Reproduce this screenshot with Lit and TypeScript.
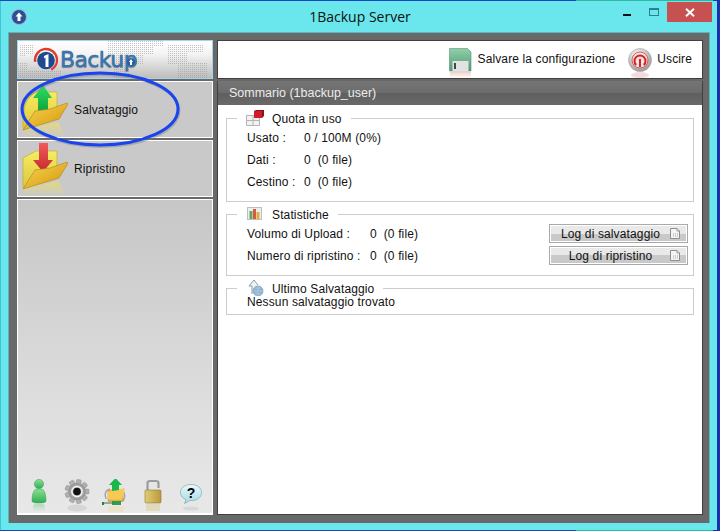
import { LitElement, html, svg, css } from "lit";
import { customElement } from "lit/decorators.js";

const folder = (up: boolean) => {
  const k = up ? 1 : 2;
  return html`
  <svg class="folder" viewBox="0 0 50 55" width="50" height="55">
    <defs>
      <linearGradient id="fb${k}" x1="0" y1="0" x2="0" y2="1"><stop offset="0" stop-color="#f6ec62"/><stop offset="1" stop-color="#dcc63a"/></linearGradient>
      <linearGradient id="ff${k}" x1="0" y1="0" x2="1" y2="1"><stop offset="0" stop-color="#f9d650"/><stop offset="1" stop-color="#d4950c"/></linearGradient>
      <linearGradient id="ar${k}" x1="0" y1="0" x2="0" y2="1"><stop offset="0" stop-color="${up ? "#2ee060" : "#f25a5a"}"/><stop offset="1" stop-color="${up ? "#0c9c3a" : "#c42a2a"}"/></linearGradient>
      <linearGradient id="rf${k}" x1="0" y1="0" x2="0" y2="1"><stop offset="0" stop-color="#f0de60" stop-opacity=".7"/><stop offset="1" stop-color="#f0de60" stop-opacity="0"/></linearGradient>
    </defs>
    <path d="M1 48 L2 55 H44 L36 40 Z" fill="url(#rf${k})"/>
    <path d="M1 17 L14 10 H35 V32 L3 47 Q1 47 1 45 Z" fill="url(#fb${k})" stroke="#b9a63a" stroke-width=".6"/>
    ${up
      ? svg`<path d="M16 32 V16 H11 L21 3 L30 16 H26 V28 Z" fill="url(#ar1)"/>`
      : svg`<path d="M17 2 H26 V19 H31 L21 31 L11 19 H17 Z" fill="url(#ar2)"/>`}
    <path d="M1 48 L13 29 L28 27 L45 21 Q46 21 45.500 23 L37 37 Z" fill="url(#ff${k})" stroke="#a88420" stroke-width=".6"/>
  </svg>`;
};

const person = html`
  <svg viewBox="0 0 24 34" width="24" height="34">
    <defs>
      <linearGradient id="pg" x1="0" y1="0" x2="0" y2="1"><stop offset="0" stop-color="#8ae08e"/><stop offset="1" stop-color="#2fae56"/></linearGradient>
      <linearGradient id="pr" x1="0" y1="0" x2="0" y2="1"><stop offset="0" stop-color="#6ecb80" stop-opacity=".45"/><stop offset="1" stop-color="#6ecb80" stop-opacity="0"/></linearGradient>
    </defs>
    <circle cx="12" cy="5" r="4.600" fill="url(#pg)" stroke="#3c9c58" stroke-width=".5"/>
    <path d="M5 22 Q5 12 9 10 H15 Q19 12 19 22 Q19 24 12 24 Q5 24 5 22 Z" fill="url(#pg)" stroke="#3c9c58" stroke-width=".5"/>
    <rect x="6" y="25" width="12" height="8" rx="3" fill="url(#pr)"/>
  </svg>`;

const gear = html`
  <svg viewBox="0 0 26 34" width="26" height="34">
    <defs>
      <radialGradient id="gg"><stop offset="0" stop-color="#f4f4f4"/><stop offset="1" stop-color="#8c8c8c"/></radialGradient>
    </defs>
    <g transform="translate(13 12.500)">
      ${[0, 40, 80, 120, 160, 200, 240, 280, 320].map(
        (a) => svg`<rect x="-2.400" y="-12" width="4.800" height="6" rx="1" fill="#b0b0b0" stroke="#7c7c7c" stroke-width=".4" transform="rotate(${a + 10})"/>`
      )}
      <circle r="8.600" fill="url(#gg)"/>
      <circle r="5.200" fill="none" stroke="#f8f8f8" stroke-width="1.200"/>
      <circle r="3.800" fill="#111"/>
    </g>
    <ellipse cx="13" cy="29" rx="10" ry="3.500" fill="#cfcfcf" opacity=".7"/>
  </svg>`;

const upload = html`
  <svg viewBox="0 0 28 34" width="28" height="34">
    <g transform="translate(0 -2)">
      <path d="M5 22 Q2 14 9 12 M21 13 Q26 18 22 24 H7" fill="none" stroke="#a8a8a8" stroke-width="1.600"/>
      <path d="M7 13 H22 V24 H7 Z" fill="#f5bb42" stroke="#b98f2c" stroke-width=".5"/>
      <path d="M7 15 L24 11 L21 22 H7 Z" fill="#f8ca55"/>
      <path d="M11 14 V8 H8 L14.500 1 L21 8 H18 V13 Z" fill="#19b84a"/>
      <rect x="11" y="24" width="9" height="4" fill="#2e9c52"/>
      <path d="M2 26 H12" stroke="#2e7c44" stroke-width="1"/>
      <rect x="1" y="25" width="2" height="3" fill="#2e7c44"/>
      <rect x="7" y="29" width="16" height="6" fill="#f0d9a0" opacity=".4"/>
    </g>
  </svg>`;

const lock = html`
  <svg viewBox="0 0 20 34" width="20" height="34">
    <defs>
      <linearGradient id="lk" x1="0" y1="0" x2="1" y2="0"><stop offset="0" stop-color="#e4cb70"/><stop offset="1" stop-color="#b79a3c"/></linearGradient>
    </defs>
    <path d="M4.500 12 V4 Q4.500 2 7 2 H13 Q15.500 2 15.500 4 V9" fill="none" stroke="#9c9c9c" stroke-width="2.200"/>
    <rect x="2" y="11" width="16" height="13" rx="1" fill="url(#lk)" stroke="#8c7a3c" stroke-width=".6"/>
    <rect x="3" y="25" width="14" height="7" fill="#d8c88a" opacity=".45"/>
  </svg>`;

const help = html`
  <svg viewBox="0 0 24 34" width="24" height="34">
    <defs>
      <linearGradient id="hp" x1="0" y1="0" x2="0" y2="1"><stop offset="0" stop-color="#eaf8fa"/><stop offset="1" stop-color="#a4dbe6"/></linearGradient>
    </defs>
    <g transform="translate(0 1.500)">
      <path d="M12 4 C5 4 1.500 8 1.500 12 C1.500 15.500 4 18 7 19 L5.500 23 L11 20 C18 20.500 22.500 17 22.500 12 C22.500 8 19 4 12 4 Z" fill="url(#hp)" stroke="#7fa8b2" stroke-width=".7"/>
      <text x="12" y="17" text-anchor="middle" class="q">?</text>
      <ellipse cx="12" cy="28" rx="8" ry="2" fill="#d2d2d2" opacity=".7"/>
    </g>
  </svg>`;

const sheet = html`
  <svg class="sheet" viewBox="0 0 10 11" width="10" height="11">
    <path d="M.5 .5 H7 L9.500 3 V10.500 H.5 Z" fill="#f4f4f4" stroke="#8e8e8e"/>
    <path d="M7 .5 V3 H9.500" fill="#ddd" stroke="#8e8e8e" stroke-width=".8"/>
    <path d="M3 6 H4 M5 6 H6 M7 6 H8 M3 8 H4 M5 8 H6 M7 8 H8" stroke="#b0a0b8"/>
  </svg>`;

@customElement("app-root")
export class AppRoot extends LitElement {
  static styles = css`
    :host {
      display: block;
      width: 720px;
      height: 531px;
      overflow: hidden;
      background: linear-gradient(90deg, #1c47c4 0 80%, #2fb9a0 80% 99%, #1c2fb0 99%);
      font-family: "Liberation Sans", Arial, sans-serif;
      font-size: 12px;
      letter-spacing: 0.13px;
      color: #111;
    }
    .window {
      width: 717px;
      height: 529px;
      margin-top: 1px;
      background: #69e7ec;
      display: flex;
      flex-direction: column;
      box-shadow: inset 1px 0 0 #3fc4d8;
    }
    .titlebar {
      height: 31px;
      flex: none;
      display: flex;
      align-items: flex-start;
      position: relative;
    }
    .appicon { margin: 8px 0 0 11px; }
    .title {
      position: absolute;
      left: 3px;
      right: 0;
      top: 6px;
      text-align: center;
      font-family: "Open Sans", "Noto Sans", sans-serif;
      font-size: 14px;
      letter-spacing: 0;
      line-height: 20px;
      color: #111;
    }
    .controls {
      margin-left: auto;
      margin-right: 5px;
      display: flex;
      align-items: flex-start;
    }
    .min { width: 8px; height: 2px; background: #111; margin: 13px 18px 0 0; }
    .max { width: 10px; height: 8px; box-sizing: border-box; border: 1px solid #2c7f8c; border-top-width: 2px; margin: 7px 8px 0 0; }
    .close {
      width: 45px;
      height: 20px;
      margin-top: 1px;
      background: #c75050;
      display: flex;
      align-items: center;
      justify-content: center;
    }
    .body {
      flex: 1;
      margin: 0 7px 7px 8px;
      background: #696969;
      border: 1px solid #5cb4bc;
      border-bottom: none;
      padding: 7px 6px 8px 8px;
      display: grid;
      grid-template-columns: 196px 486px;
      column-gap: 4px;
      box-sizing: border-box;
      min-height: 0;
    }
    .side {
      display: flex;
      flex-direction: column;
      gap: 2px;
      position: relative;
      min-height: 0;
    }
    .logo {
      height: 39px;
      box-sizing: border-box;
      border: 1px solid #a4d3ee;
      background: linear-gradient(180deg, #fff 0, #f4f4f4 35%, #bdbdbd 100%);
      display: flex;
      align-items: center;
      padding-left: 15px;
      position: relative;
      overflow: hidden;
    }
    .dots { position: absolute; inset: 0; }
    .mark { position: relative; flex: none; }
    .brand {
      position: relative;
      font-family: "DejaVu Sans", sans-serif;
      font-size: 22px;
      line-height: 26px;
      color: #3b78b4;
      letter-spacing: -0.6px;
      -webkit-text-stroke: 0.4px #2d6aa6;
      margin-left: 1px;
      text-shadow: 0 1px 1px #8a8a8a;
    }
    .pdot { position: absolute; left: 67px; top: 11px; }
    .nav {
      height: 57px;
      box-sizing: border-box;
      background: #c9c9c9;
      border: 1px solid #fff;
      display: flex;
      align-items: flex-start;
      padding-left: 4px;
      gap: 1px;
    }
    .nav span { line-height: 56px; margin-left: 1px; }
    .folder { flex: none; }
    .rest {
      flex: 1;
      background: linear-gradient(180deg, #c6c6c6 0, #dcdcdc 60%, #e8e8e8 100%);
      border: 1px solid #fff;
      border-bottom-width: 2px;
      display: flex;
      align-items: flex-end;
      padding: 0 2px;
    }
    .rest > div { width: 38px; display: flex; justify-content: center; }
    .ring { position: absolute; left: 2px; top: 30px; overflow: visible; pointer-events: none; }
    .q { font: bold 14px "Liberation Sans", sans-serif; fill: #000; }
    .main { display: flex; flex-direction: column; gap: 2px; min-height: 0; }
    .toolbar {
      height: 39px;
      box-sizing: border-box;
      background: #fff;
      border: 1px solid #3f3f3f;
      display: flex;
      justify-content: flex-end;
      align-items: flex-start;
      padding-right: 10px;
    }
    .tool { display: flex; align-items: flex-start; line-height: 37px; letter-spacing: 0.12px; }
    .tool svg { margin-top: 7px; flex: none; }
    .save svg { margin-right: 5px; }
    .exit { margin-left: 13px; }
    .exit svg { margin-right: 5px; }
    .panel {
      flex: 1;
      background: #fff;
      border: 1px solid #3f3f3f;
      border-top: none;
      display: flex;
      flex-direction: column;
      min-height: 0;
    }
    .head {
      height: 24px;
      flex: none;
      background: linear-gradient(180deg, #757575 0, #6c6c6c 50%, #5f5f5f 52%, #6a6a6a 100%);
      color: #ececec;
      font-size: 12.500px;
      letter-spacing: 0;
      line-height: 25px;
      padding-left: 11px;
    }
    .content { padding: 4px 8px 0 8px; display: flex; flex-direction: column; gap: 3px; }
    fieldset {
      margin: 0;
      border: 1px solid #ccc;
      padding: 0 4px 0 20px;
      min-width: 0;
    }
    legend {
      margin-left: -10px;
      padding: 0 9px;
      height: 18px;
      display: flex;
      align-items: center;
      gap: 8px;
      line-height: 18px;
    }
    legend svg { flex: none; }
    legend span { padding-top: 2px; }
    .quota { padding-bottom: 8px; }
    .row { display: grid; height: 22px; line-height: 22px; grid-template-columns: 57px auto; }
    .stat { padding-top: 1px; padding-bottom: 10px; display: flex; flex-direction: column; gap: 3px; }
    .srow { height: 19px; line-height: 21px; display: grid; grid-template-columns: 123px 179px 139px; }
    .btn {
      grid-column: 3;
      height: 19px;
      box-sizing: border-box;
      border: 1px solid #a9a9a9;
      box-shadow: inset 0 0 0 1px #fff;
      background: linear-gradient(180deg, #e9e9e9 0 50%, #c9c9c9 50% 100%);
      display: flex;
      align-items: center;
      justify-content: center;
      position: relative;
      padding: 2px 16px 0 0;
      line-height: 15px;
    }
    .sheet { position: absolute; right: 7px; top: 3px; }
    .last { padding-bottom: 5px; }
    .last p { margin: -1px 0 0; line-height: 13px; }
  `;

  render() {
    return html`
      <div class="window">
        <div class="titlebar">
          <svg class="appicon" viewBox="0 0 16 16" width="16" height="16">
            <circle cx="8" cy="8" r="7.500" fill="#2c4f96" stroke="#9fb6d8"/>
            <path d="M8 3.500 L11.500 7.500 H9.500 V12 H6.500 V7.500 H4.500 Z" fill="#fff"/>
          </svg>
          <div class="title">1Backup Server</div>
          <div class="controls">
            <div class="min"></div>
            <div class="max"></div>
            <div class="close">
              <svg viewBox="0 0 10 9" width="10" height="9"><path d="M1 .8 L9 8.200 M9 .8 L1 8.200" stroke="#fff" stroke-width="2"/></svg>
            </div>
          </div>
        </div>
        <div class="body">
          <div class="side">
            <div class="logo">
              <svg class="dots" width="194" height="37">
                <defs>
                  <pattern id="dp" width="2" height="2" patternUnits="userSpaceOnUse"><rect width="1" height="1" fill="#8e8e8e"/></pattern>
                </defs>
                <path d="M2 4 H16 V14 H8 V16 H2 Z M0 22 H10 V30 H44 V37 H0 Z M90 0 H146 V6 H136 V14 H126 V24 H112 V37 H96 V16 H90 Z M150 4 H186 V12 H170 V22 H190 V37 H160 V24 H150 Z" fill="url(#dp)" opacity=".5"/>
              </svg>
              <svg class="mark" viewBox="0 0 26 26" width="26" height="26">
                <circle cx="13" cy="13" r="11" fill="none" stroke="#e23b2e" stroke-width="2.400" stroke-dasharray="48 22" transform="rotate(170 13 13)"/>
                <circle cx="13" cy="13.500" r="8.800" fill="#1d4a8e"/>
                <path d="M11 9 L15.500 7 V20 H12.500 V10.500 L11 11.500 Z" fill="#fff"/>
              </svg>
              <span class="brand">Backup<svg class="pdot" viewBox="0 0 8 8" width="8" height="8"><circle cx="4" cy="4" r="4" fill="#2c5f9c"/><path d="M4 1 L6 4 H5 V7 H3 V4 H2 Z" fill="#fff"/></svg></span>
            </div>
            <div class="nav">${folder(true)}<span>Salvataggio</span></div>
            <div class="nav">${folder(false)}<span>Ripristino</span></div>
            <div class="rest">
              <div>${person}</div><div>${gear}</div><div>${upload}</div><div>${lock}</div><div>${help}</div>
            </div>
            <svg class="ring" width="166" height="80" viewBox="0 0 166 80">
              <ellipse cx="81" cy="39" rx="78" ry="36" fill="none" stroke="#777" stroke-width="3" opacity=".4" transform="translate(1 1.500)"/>
              <ellipse cx="81" cy="39" rx="78" ry="36" fill="none" stroke="#1a44ee" stroke-width="3"/>
            </svg>
          </div>
          <div class="main">
            <div class="toolbar">
              <div class="tool save">
                <svg viewBox="0 0 24 30" width="24" height="30">
                  <defs>
                    <linearGradient id="dk" x1="0" y1="0" x2="0" y2="1"><stop offset="0" stop-color="#8fd0a8"/><stop offset="1" stop-color="#4f9a78"/></linearGradient>
                    <linearGradient id="dr" x1="0" y1="0" x2="0" y2="1"><stop offset="0" stop-color="#e8b0a0" stop-opacity=".6"/><stop offset="1" stop-color="#e8b0a0" stop-opacity="0"/></linearGradient>
                  </defs>
                  <path d="M.5 .5 H18.500 L22 4 V23 H.5 Z" fill="url(#dk)" stroke="#5e8f78" stroke-width=".6"/>
                  <rect x="3.500" y="13" width="16" height="10" fill="#e2e2e2"/>
                  <rect x="5" y="15" width="2" height="6" fill="#444"/>
                  <rect x="1" y="24" width="21" height="6" fill="url(#dr)"/>
                </svg>
                <span>Salvare la configurazione</span>
              </div>
              <div class="tool exit">
                <svg viewBox="0 0 24 30" width="24" height="30">
                  <defs>
                    <radialGradient id="ex" cx=".4" cy=".3" r=".8"><stop offset="0" stop-color="#fff"/><stop offset="1" stop-color="#8f8f8f"/></radialGradient>
                  </defs>
                  <circle cx="12" cy="12" r="11.500" fill="url(#ex)" stroke="#999" stroke-width=".5"/>
                  <circle cx="12" cy="12" r="8" fill="#f5e4e4" stroke="#d63a3a" stroke-width=".8"/>
                  <path d="M8.200 17 A5.500 5.500 0 1 1 15.800 17" fill="none" stroke="#d82020" stroke-width="2"/>
                  <path d="M12 11 V19" stroke="#d82020" stroke-width="2"/>
                  <ellipse cx="12" cy="27" rx="9" ry="3" fill="#e8b8b8" opacity=".5"/>
                </svg>
                <span>Uscire</span>
              </div>
            </div>
            <div class="panel">
              <div class="head">Sommario (1backup_user)</div>
              <div class="content">
                <fieldset class="quota">
                  <legend>
                    <svg viewBox="0 0 18 16" width="18" height="16">
                      <path d="M.5 5.500 H13.500 V15.500 H.5 Z M7 5.500 V15.500 M.5 10.500 H13.500" fill="#f2f2f2" stroke="#b4b4b4"/>
                      <rect x="8" y="1" width="8" height="7" fill="#d01c28"/>
                      <path d="M8 1 L10 0 H18 L16 1 Z M16 1 L18 0 V6 L16 8 Z" fill="#901018"/>
                    </svg>
                    <span>Quota in uso</span>
                  </legend>
                  <div class="row"><span>Usato :</span><span>0 / 100M (0%)</span></div>
                  <div class="row"><span>Dati :</span><span>0&nbsp; (0 file)</span></div>
                  <div class="row"><span>Cestino :</span><span>0&nbsp; (0 file)</span></div>
                </fieldset>
                <fieldset class="stat">
                  <legend>
                    <svg viewBox="0 0 18 16" width="18" height="16">
                      <rect x="1.500" y="1.500" width="14" height="12" fill="#eee" stroke="#b8c0c4"/>
                      <rect x="3.500" y="5" width="3" height="8" fill="#5fa860"/>
                      <rect x="7" y="3" width="3" height="10" fill="#d85a3a"/>
                      <rect x="10.500" y="6" width="3" height="7" fill="#e8a83a"/>
                    </svg>
                    <span>Statistiche</span>
                  </legend>
                  <div class="srow"><span>Volumo di Upload :</span><span>0&nbsp; (0 file)</span>
                    <div class="btn">Log di salvataggio${sheet}</div></div>
                  <div class="srow"><span>Numero di ripristino :</span><span>0&nbsp; (0 file)</span>
                    <div class="btn">Log di ripristino${sheet}</div></div>
                </fieldset>
                <fieldset class="last">
                  <legend>
                    <svg viewBox="0 0 18 16" width="18" height="16">
                      <path d="M6 14 V6 H3 L8 0 L12 5" fill="#f2f2f2" stroke="#8c9ca4"/>
                      <circle cx="12" cy="11" r="5" fill="#8db4d4" stroke="#6a90ac" stroke-width=".6"/>
                      <path d="M7 11 H17 M12 6 V16 M8.500 8 H15.500 M8.500 14 H15.500" stroke="#c0d8ea" stroke-width=".5"/>
                    </svg>
                    <span>Ultimo Salvataggio</span>
                  </legend>
                  <p>Nessun salvataggio trovato</p>
                </fieldset>
              </div>
            </div>
          </div>
        </div>
      </div>
    `;
  }
}
